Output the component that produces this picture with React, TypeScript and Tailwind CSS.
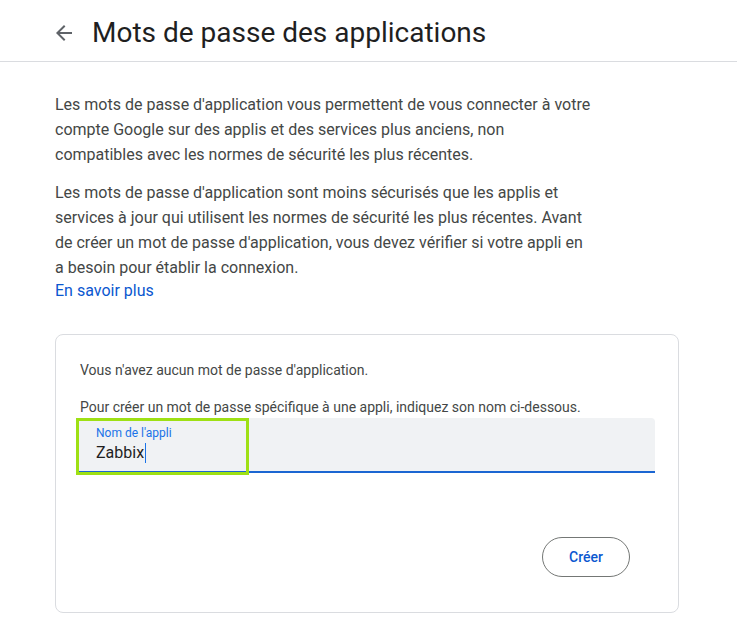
export default function App() {
  return (
    <div className="min-h-[629px] bg-white text-[#1f1f1f]" style={{ fontFamily: 'Roboto, "Liberation Sans", sans-serif' }}>
      <header className="flex h-[62px] items-center border-b border-[#dadce0] pt-[5px]">
        <button className="ml-[52px] flex h-6 w-6 items-center justify-center text-[#5f6368]" aria-label="Retour">
          <svg viewBox="0 0 24 24" className="h-6 w-6" fill="currentColor">
            <path d="M20 11H7.83l5.59-5.59L12 4l-8 8 8 8 1.41-1.41L7.83 13H20v-2z" />
          </svg>
        </button>
        <h1 className="ml-4 text-[28px] leading-9 text-[#1f1f1f]">Mots de passe des applications</h1>
      </header>

      <main className="px-[55px] pt-[30px]">
        <div className="w-[580px] text-base leading-[25px] text-[#444746]">
          <p>
            Les mots de passe d'application vous permettent de vous connecter à votre
            <br />
            compte Google sur des applis et des services plus anciens, non
            <br />
            compatibles avec les normes de sécurité les plus récentes.
          </p>
          <p className="mt-[13px]">
            Les mots de passe d'application sont moins sécurisés que les applis et
            <br />
            services à jour qui utilisent les normes de sécurité les plus récentes. Avant
            <br />
            de créer un mot de passe d'application, vous devez vérifier si votre appli en
            <br />
            a besoin pour établir la connexion.
          </p>
          <a href="#" className="block leading-[22px] text-[#0b57d0]">
            En savoir plus
          </a>
        </div>

        <section className="mt-[32px] h-[279px] w-[624px] rounded-lg border border-[#dadce0] px-6 pt-[25px]">
          <p className="text-sm leading-5 text-[#444746]">Vous n'avez aucun mot de passe d'application.</p>
          <p className="mt-[17px] text-sm leading-5 text-[#444746]">
            Pour créer un mot de passe spécifique à une appli, indiquez son nom ci-dessous.
          </p>

          <div className="relative -ml-[2px] mt-[1px] h-[55px] w-[577px] rounded-t-[4px] border-b-2 border-[#1b66d2] bg-[#f0f2f4] pl-[18px] pt-[7px]">
            <div className="text-xs leading-4 text-[#1a73e8]">Nom de l'appli</div>
            <div className="flex items-center text-base leading-6 text-[#1f1f1f]">
              Zabbix
              <span className="ml-px h-5 w-px bg-[#1a73e8]" />
            </div>
            <div className="absolute -left-[2px] top-0 h-[57px] w-[173px] border-[3px] border-[#9ee014]" />
          </div>

          <div className="mt-[64px] flex justify-end pr-[24px]">
            <button className="h-10 w-[88px] rounded-full border border-[#747775] text-sm font-medium text-[#0b57d0]">
              Créer
            </button>
          </div>
        </section>
      </main>
    </div>
  );
}
